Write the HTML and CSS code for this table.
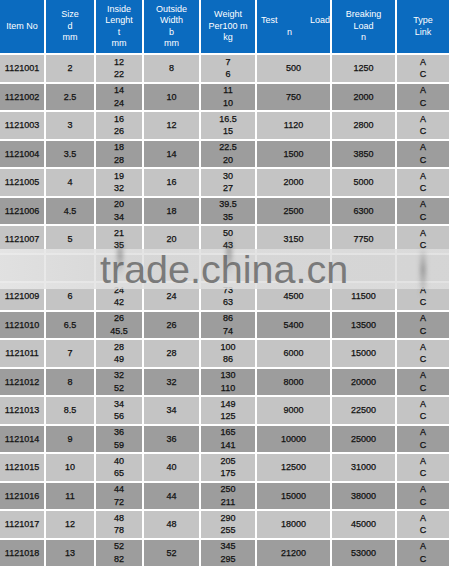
FILE: index.html
```html
<!DOCTYPE html>
<html>
<head>
<meta charset="utf-8">
<link rel="stylesheet" href="styles.css">
</head>
<body>
<div class="wrap">
  <div class="grid">
    <div class="h">Item No</div>
    <div class="h">Size<br>d<br>mm</div>
    <div class="h">Inside<br>Lenght<br>t<br>mm</div>
    <div class="h">Outside<br>Width<br>b<br>mm</div>
    <div class="h">Weight<br>Per100 m<br>kg</div>
    <div class="h test"><div class="tl"><span>Test</span><span>Load</span></div><div class="tn">n</div></div>
    <div class="h">Breaking<br>Load<br>n</div>
    <div class="h">Type<br>Link</div>

    <div class="c l">1121001</div><div class="c l">2</div><div class="c l">12<br>22</div><div class="c l">8</div><div class="c l">7<br>6</div><div class="c l">500</div><div class="c l">1250</div><div class="c l">A<br>C</div>
    <div class="c d">1121002</div><div class="c d">2.5</div><div class="c d">14<br>24</div><div class="c d">10</div><div class="c d">11<br>10</div><div class="c d">750</div><div class="c d">2000</div><div class="c d">A<br>C</div>
    <div class="c l">1121003</div><div class="c l">3</div><div class="c l">16<br>26</div><div class="c l">12</div><div class="c l">16.5<br>15</div><div class="c l">1120</div><div class="c l">2800</div><div class="c l">A<br>C</div>
    <div class="c d">1121004</div><div class="c d">3.5</div><div class="c d">18<br>28</div><div class="c d">14</div><div class="c d">22.5<br>20</div><div class="c d">1500</div><div class="c d">3850</div><div class="c d">A<br>C</div>
    <div class="c l">1121005</div><div class="c l">4</div><div class="c l">19<br>32</div><div class="c l">16</div><div class="c l">30<br>27</div><div class="c l">2000</div><div class="c l">5000</div><div class="c l">A<br>C</div>
    <div class="c d">1121006</div><div class="c d">4.5</div><div class="c d">20<br>34</div><div class="c d">18</div><div class="c d">39.5<br>35</div><div class="c d">2500</div><div class="c d">6300</div><div class="c d">A<br>C</div>
    <div class="c l">1121007</div><div class="c l">5</div><div class="c l">21<br>35</div><div class="c l">20</div><div class="c l">50<br>43</div><div class="c l">3150</div><div class="c l">7750</div><div class="c l">A<br>C</div>
    <div class="c d"></div><div class="c d"></div><div class="c d"></div><div class="c d"></div><div class="c d"></div><div class="c d"></div><div class="c d"></div><div class="c d"></div>
    <div class="c l">1121009</div><div class="c l">6</div><div class="c l">24<br>42</div><div class="c l">24</div><div class="c l">73<br>63</div><div class="c l">4500</div><div class="c l">11500</div><div class="c l">A<br>C</div>
    <div class="c d">1121010</div><div class="c d">6.5</div><div class="c d">26<br>45.5</div><div class="c d">26</div><div class="c d">86<br>74</div><div class="c d">5400</div><div class="c d">13500</div><div class="c d">A<br>C</div>
    <div class="c l">1121011</div><div class="c l">7</div><div class="c l">28<br>49</div><div class="c l">28</div><div class="c l">100<br>86</div><div class="c l">6000</div><div class="c l">15000</div><div class="c l">A<br>C</div>
    <div class="c d">1121012</div><div class="c d">8</div><div class="c d">32<br>52</div><div class="c d">32</div><div class="c d">130<br>110</div><div class="c d">8000</div><div class="c d">20000</div><div class="c d">A<br>C</div>
    <div class="c l">1121013</div><div class="c l">8.5</div><div class="c l">34<br>56</div><div class="c l">34</div><div class="c l">149<br>125</div><div class="c l">9000</div><div class="c l">22500</div><div class="c l">A<br>C</div>
    <div class="c d">1121014</div><div class="c d">9</div><div class="c d">36<br>59</div><div class="c d">36</div><div class="c d">165<br>141</div><div class="c d">10000</div><div class="c d">25000</div><div class="c d">A<br>C</div>
    <div class="c l">1121015</div><div class="c l">10</div><div class="c l">40<br>65</div><div class="c l">40</div><div class="c l">205<br>175</div><div class="c l">12500</div><div class="c l">31000</div><div class="c l">A<br>C</div>
    <div class="c d">1121016</div><div class="c d">11</div><div class="c d">44<br>72</div><div class="c d">44</div><div class="c d">250<br>211</div><div class="c d">15000</div><div class="c d">38000</div><div class="c d">A<br>C</div>
    <div class="c l">1121017</div><div class="c l">12</div><div class="c l">48<br>78</div><div class="c l">48</div><div class="c l">290<br>255</div><div class="c l">18000</div><div class="c l">45000</div><div class="c l">A<br>C</div>
    <div class="c d">1121018</div><div class="c d">13</div><div class="c d">52<br>82</div><div class="c d">52</div><div class="c d">345<br>295</div><div class="c d">21200</div><div class="c d">53000</div><div class="c d">A<br>C</div>
  </div>
  <div class="band"><span class="wm">trade.china.cn</span></div>
  <div class="smudge s1"></div>
  <div class="smudge s2"></div>
  <div class="smudge s3"></div>
</div>
</body>
</html>
```
FILE: styles.css
```css
html, body {
  margin: 0;
  padding: 0;
  background: #ffffff;
}
.wrap {
  position: relative;
  width: 449px;
  height: 566px;
  overflow: hidden;
}
.grid {
  display: grid;
  grid-template-columns: 44px 48px 46px 55px 54px 73px 63px 52px;
  grid-template-rows: 53px repeat(18, 26.5px);
  gap: 2px;
  background: #ffffff;
  font-family: "Liberation Sans", Arial, sans-serif;
  font-size: 9px;
}
.h {
  background: #0b6bbf;
  color: #ffffff;
  display: flex;
  align-items: center;
  justify-content: center;
  text-align: center;
  line-height: 11.5px;
}
.test {
  flex-direction: column;
  align-items: stretch;
  padding: 0 0 0 4px;
}
.tl {
  display: flex;
  justify-content: space-between;
}
.tn {
  text-align: left;
  padding-left: 26px;
}
.c {
  display: flex;
  align-items: center;
  justify-content: center;
  text-align: center;
  color: #111111;
  line-height: 12.5px;
  -webkit-text-stroke: 0.25px #111111;
}
.l { background: #c4c4c4; }
.d { background: #9d9d9d; }
.band {
  position: absolute;
  left: 0;
  top: 249px;
  width: 449px;
  height: 40px;
  background: linear-gradient(90deg, rgba(232,232,232,0.9) 0%, rgba(224,224,224,0.86) 30%, rgba(222,222,222,0.86) 100%);
  line-height: 40px;
  font-family: "Liberation Sans", Arial, sans-serif;
  font-size: 39.5px;
}
.wm {
  position: absolute;
  left: 100px;
  top: 0;
  color: #7a7a7a;
  white-space: nowrap;
}
.smudge {
  position: absolute;
  width: 6px;
  background: linear-gradient(180deg, rgba(90,90,90,0) 0%, rgba(90,90,90,0.45) 45%, rgba(90,90,90,0) 100%);
  filter: blur(2px);
}
.s1 { left: 117px; top: 236px; height: 40px; }
.s2 { left: 226px; top: 234px; height: 40px; }
.s3 { left: 420px; top: 246px; height: 52px; }
```
